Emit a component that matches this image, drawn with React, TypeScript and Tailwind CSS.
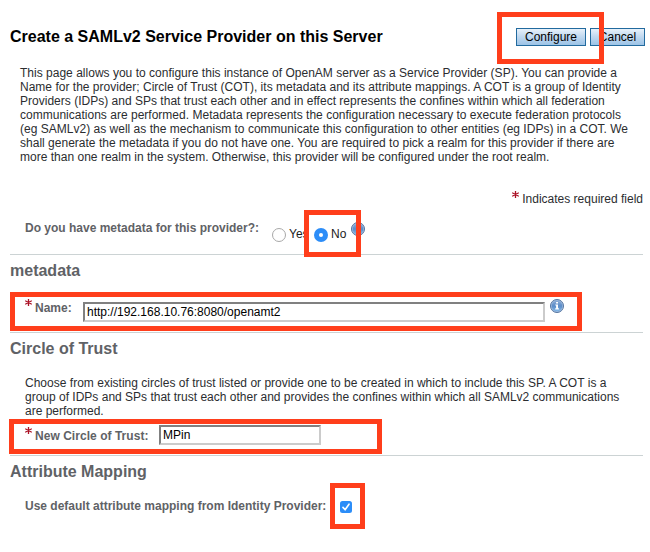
import type { ReactNode } from 'react';

function Asterisk({ className }: { className: string }) {
  return (
    <svg viewBox="0 0 7 7" className={`h-[7px] w-[7px] shrink-0 ${className}`} aria-label="required">
      <path d="M3.5 0V7M0.2 1.7L6.8 5.3M6.8 1.7L0.2 5.3" stroke="#ab1226" strokeWidth="1.3" fill="none" />
    </svg>
  );
}

function InfoIcon({ className }: { className: string }) {
  return (
    <svg viewBox="0 0 14 14" className={`h-[14px] w-[14px] shrink-0 ${className}`} aria-label="info">
      <defs>
        <linearGradient id="info-fill" x1="0" y1="0" x2="0" y2="1">
          <stop offset="0" stopColor="#8aabd6" />
          <stop offset="0.5" stopColor="#5b8cc8" />
          <stop offset="1" stopColor="#7fb6e6" />
        </linearGradient>
      </defs>
      <circle cx="7" cy="7" r="6.5" fill="#9dbbe0" stroke="#54749f" strokeWidth="1" />
      <circle cx="7" cy="7" r="5.3" fill="url(#info-fill)" />
      <path d="M6.1 3.1h1.9v1.5H6.1zM5.3 5.6H8v3.7h.9v1.1H5.2V9.3h.9V6.6h-.8z" fill="#fff" />
    </svg>
  );
}

function Highlight({ className }: { className: string }) {
  return <div className={`pointer-events-none absolute border-5 border-[#ff3e1b] ${className}`} />;
}

function ActionButton({ className, children }: { className: string; children: ReactNode }) {
  return (
    <button
      className={`flex h-[18px] shrink-0 items-start justify-center border border-[#226a9e] bg-linear-to-b from-[#e8f1fa] via-[#c3daf0] via-45% to-[#9cc3e6] pt-px leading-[14px] text-black ${className}`}
    >
      {children}
    </button>
  );
}

function Field({ value, className }: { value: string; className: string }) {
  return (
    <input
      readOnly
      value={value}
      className={`h-5 shrink-0 border-2 border-t-[#808080] border-r-[#cbcbcb] border-b-[#cbcbcb] border-l-[#808080] bg-white px-0.5 pb-px leading-[14px] text-black outline-none ${className}`}
    />
  );
}

const label = 'shrink-0 font-bold text-[#5f6266]';
const heading = 'h-[18px] text-base leading-[18px] font-bold text-[#5f6266]';

export default function App() {
  return (
    <main className="relative h-[552px] w-[650px] overflow-hidden bg-white pl-[10px] font-['Liberation_Sans',Arial,sans-serif] text-xs leading-[14px] whitespace-nowrap text-[#2b2d30]">
      <header className="flex h-[66px] items-start justify-between pt-[28px] pr-[5px]">
        <h1 className="text-base leading-[18px] font-bold text-black">Create a SAMLv2 Service Provider on this Server</h1>
        <div className="flex gap-1">
          <ActionButton className="w-[70px]">Configure</ActionButton>
          <ActionButton className="w-[55px]">Cancel</ActionButton>
        </div>
      </header>

      <p className="h-[126px] pl-[10px] tracking-[0.012px]">
        This page allows you to configure this instance of OpenAM server as a Service Provider (SP). You can provide a
        <br />
        Name for the provider; Circle of Trust (COT), its metadata and its attribute mappings. A COT is a group of Identity
        <br />
        Providers (IDPs) and SPs that trust each other and in effect represents the confines within which all federation
        <br />
        communications are performed. Metadata represents the configuration necessary to execute federation protocols
        <br />
        (eg SAMLv2) as well as the mechanism to communicate this configuration to other entities (eg IDPs) in a COT. We
        <br />
        shall generate the metadata if you do not have one. You are required to pick a realm for this provider if there are
        <br />
        more than one realm in the system. Otherwise, this provider will be configured under the root realm.
      </p>

      <div className="flex h-[29px] items-start justify-end pr-[7px]">
        <Asterisk className="-mt-px mr-[3px]" />
        <span>Indicates required field</span>
      </div>

      <section className="mr-[7px] flex h-[34px] items-start border-b border-[#ccd3d4] pl-[15px]">
        <span className={`w-[247px] ${label}`}>Do you have metadata for this provider?:</span>
        <span className="mt-[7px] h-[14px] w-[14px] rounded-full border border-[#a8a8a8] bg-white" />
        <span className="mt-1.5 ml-[3px] w-[25px] text-[#1c1c1c]">Yes</span>
        <span className="mt-[7px] flex h-[14px] w-[14px] items-center justify-center rounded-full bg-[#2c8df8]">
          <span className="h-1 w-1 rounded-full bg-white" />
        </span>
        <span className="mt-1.5 ml-[3px] w-5 text-[#1c1c1c]">No</span>
        <InfoIcon className="mt-px" />
      </section>

      <section className="mr-[7px] h-[78px] border-b border-[#ccd3d4] pt-[7px]">
        <h2 className={heading}>metadata</h2>
        <div className="flex items-start pt-[19px] pl-[15px]">
          <Asterisk className="mt-0" />
          <span className={`mt-0.5 ml-[3px] w-12 ${label}`}>Name:</span>
          <Field value="http://192.168.10.76:8080/openamt2" className="mt-[3px] w-[462px]" />
          <InfoIcon className="ml-[5px]" />
        </div>
      </section>

      <section className="mr-[7px] h-[123px] border-b border-[#ccd3d4] pt-[7px]">
        <h2 className={heading}>Circle of Trust</h2>
        <div className="h-[69px] pt-[18px] pl-[15px]">
          <p className="tracking-[0.014px]">
            Choose from existing circles of trust listed or provide one to be created in which to include this SP. A COT is a
          </p>
          <p>group of IDPs and SPs that trust each other and provides the confines within which all SAMLv2 communications</p>
          <p>are performed.</p>
        </div>
        <div className="flex items-start pl-[15px]">
          <Asterisk className="mt-0" />
          <span className={`mt-0.5 ml-[3px] w-[124px] tracking-[0.04px] ${label}`}>New Circle of Trust:</span>
          <Field value="MPin" className="-mt-[2px] w-[162px]" />
        </div>
      </section>

      <section className="pt-[7px]">
        <h2 className={heading}>Attribute Mapping</h2>
        <div className="flex items-start pt-[18px] pl-[15px]">
          <span className={`w-[315px] ${label}`}>Use default attribute mapping from Identity Provider:</span>
          <span className="mt-0.5 h-3 w-3 rounded-[2.5px] bg-[#2c8df8]">
            <svg viewBox="0 0 12 12" className="h-3 w-3">
              <path d="M3 6.4L5.1 8.8L9 3.2" stroke="#fff" strokeWidth="1.6" fill="none" strokeLinecap="round" strokeLinejoin="round" />
            </svg>
          </span>
        </div>
      </section>

      <Highlight className="top-[12px] left-[497px] h-[52px] w-[107px]" />
      <Highlight className="top-[210px] left-[304px] h-[47px] w-[57px]" />
      <Highlight className="top-[292px] left-[10px] h-[39px] w-[572px]" />
      <Highlight className="top-[419px] left-[9px] h-[35px] w-[373px]" />
      <Highlight className="top-[483px] left-[330px] h-[46px] w-[35px]" />
    </main>
  );
}
